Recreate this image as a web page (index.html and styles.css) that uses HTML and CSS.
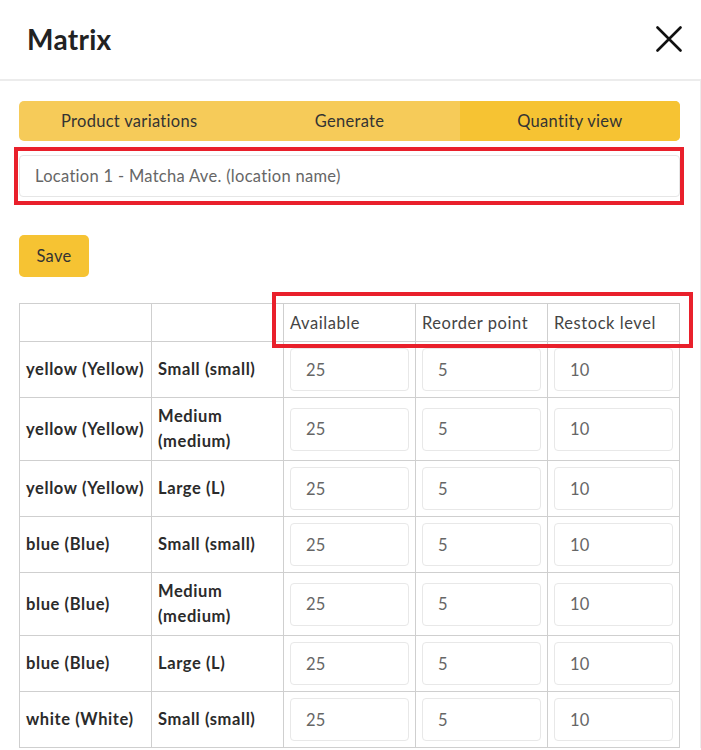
FILE: index.html
```html
<!DOCTYPE html>
<html lang="en">
<head>
  <meta charset="UTF-8">
  <meta name="viewport" content="width=device-width, initial-scale=1.0">
  <title>Matrix</title>
  <link rel="stylesheet" href="styles.css">
</head>
<body>
  <div class="modal">
    <div class="modal_header">
      <h1 class="title">Matrix</h1>
      <button class="close" aria-label="Close">
        <svg width="26" height="26" viewBox="0 0 26 26">
          <path d="M1.5 1.5 L24.5 24.5 M24.5 1.5 L1.5 24.5" stroke="#111" stroke-width="2.6" stroke-linecap="round" fill="none"/>
        </svg>
      </button>
    </div>

    <div class="modal_body">
      <div class="tabs">
        <div class="tab">Product variations</div>
        <div class="tab">Generate</div>
        <div class="tab active">Quantity view</div>
      </div>

      <div class="location_wrap">
        <input class="location" type="text" value="Location 1 - Matcha Ave. (location name)">
      </div>

      <button class="save">Save</button>

      <div class="table_wrap">
        <table class="matrix">
          <thead>
            <tr>
              <th></th>
              <th></th>
              <th>Available</th>
              <th>Reorder point</th>
              <th>Restock level</th>
            </tr>
          </thead>
          <tbody>
            <tr>
              <td class="name">yellow (Yellow)</td>
              <td class="name">Small (small)</td>
              <td><input class="qty" value="25"></td>
              <td><input class="qty" value="5"></td>
              <td><input class="qty" value="10"></td>
            </tr>
            <tr>
              <td class="name">yellow (Yellow)</td>
              <td class="name">Medium (medium)</td>
              <td><input class="qty" value="25"></td>
              <td><input class="qty" value="5"></td>
              <td><input class="qty" value="10"></td>
            </tr>
            <tr>
              <td class="name">yellow (Yellow)</td>
              <td class="name">Large (L)</td>
              <td><input class="qty" value="25"></td>
              <td><input class="qty" value="5"></td>
              <td><input class="qty" value="10"></td>
            </tr>
            <tr>
              <td class="name">blue (Blue)</td>
              <td class="name">Small (small)</td>
              <td><input class="qty" value="25"></td>
              <td><input class="qty" value="5"></td>
              <td><input class="qty" value="10"></td>
            </tr>
            <tr>
              <td class="name">blue (Blue)</td>
              <td class="name">Medium (medium)</td>
              <td><input class="qty" value="25"></td>
              <td><input class="qty" value="5"></td>
              <td><input class="qty" value="10"></td>
            </tr>
            <tr>
              <td class="name">blue (Blue)</td>
              <td class="name">Large (L)</td>
              <td><input class="qty" value="25"></td>
              <td><input class="qty" value="5"></td>
              <td><input class="qty" value="10"></td>
            </tr>
            <tr>
              <td class="name">white (White)</td>
              <td class="name">Small (small)</td>
              <td><input class="qty" value="25"></td>
              <td><input class="qty" value="5"></td>
              <td><input class="qty" value="10"></td>
            </tr>
          </tbody>
        </table>
        <div class="head_mark"></div>
      </div>
    </div>
  </div>
</body>
</html>
```

FILE: styles.css
```css
*{
  margin: 0;
  padding: 0;
  box-sizing: border-box;
}

body{
  font-family: Lato, "Open Sans", Arial, sans-serif;
  color: #333;
  background: #fff;
}

.modal{
  width: 701px;
}

.modal_header{
  height: 81px;
  display: flex;
  justify-content: space-between;
  align-items: center;
  padding: 0 19px 2px 27px;
  border-bottom: 2px solid #ececec;
}

.title{
  font-size: 28px;
  font-weight: 700;
  color: #222;
  letter-spacing: 0.3px;
}

.close{
  border: none;
  background: none;
  display: flex;
  cursor: pointer;
}

.modal_body{
  padding: 20px 20px 0 19px;
  border-right: 1px solid #ececec;
}

.tabs{
  display: flex;
  height: 40px;
  border-radius: 5px;
  overflow: hidden;
  background: #f6cb59;
}

.tab{
  flex: 1;
  display: flex;
  justify-content: center;
  align-items: center;
  font-size: 16.5px;
  letter-spacing: 0.3px;
  color: #333;
}

.tab.active{
  background: #f6c333;
}

/* red annotation boxes */
.location_wrap{
  position: relative;
  margin-top: 14px;
}
.location_wrap::after{
  content: "";
  position: absolute;
  top: -8px;
  left: -5px;
  right: -4px;
  bottom: -8px;
  border: 4.5px solid #e9202b;
  pointer-events: none;
}

.location{
  display: block;
  width: 100%;
  height: 42px;
  border: 1px solid #e6e6e6;
  border-radius: 4px;
  padding: 0 15px;
  font-family: inherit;
  font-size: 16.5px;
  letter-spacing: 0.3px;
  color: #666;
  outline: none;
}

.save{
  display: block;
  margin-top: 38px;
  width: 70px;
  height: 42px;
  border: none;
  border-radius: 5px;
  background: #f6c333;
  font-family: inherit;
  font-size: 16.5px;
  letter-spacing: 0.3px;
  color: #333;
}

.table_wrap{
  position: relative;
  margin-top: 26px;
}

.head_mark{
  position: absolute;
  top: -11px;
  left: 253px;
  width: 421px;
  height: 56px;
  border: 4.5px solid #e9202b;
  pointer-events: none;
}

.matrix{
  width: 100%;
  border-collapse: collapse;
  table-layout: fixed;
}

.matrix th,
.matrix td{
  border: 1px solid #cfcfcf;
  padding: 6px;
  text-align: left;
  vertical-align: middle;
}

.matrix th{
  height: 38px;
  font-size: 16.5px;
  font-weight: 400;
  letter-spacing: 0.55px;
  color: #444;
}

.matrix td.name{
  font-size: 16.5px;
  font-weight: 700;
  letter-spacing: 0.6px;
  color: #2b2b2b;
  line-height: 25px;
}

.qty{
  display: block;
  width: 100%;
  height: 43px;
  border: 1px solid #e8e8e8;
  border-radius: 4px;
  padding: 0 15px;
  font-family: inherit;
  font-size: 16.5px;
  letter-spacing: 0.3px;
  color: #666;
  outline: none;
}
```
